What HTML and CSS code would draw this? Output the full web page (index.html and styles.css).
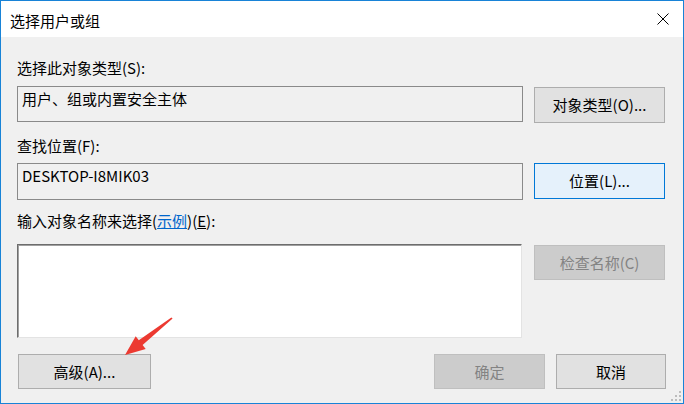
FILE: index.html
```html
<!DOCTYPE html>
<html lang="zh-CN">
<head>
    <meta charset="UTF-8">
    <title>选择用户或组</title>
    <link rel="stylesheet" href="styles.css">
</head>
<body>
    <div class="window">
        <div class="title-bar">
            <span class="title">选择用户或组</span>
            <button class="close-button" aria-label="关闭">
                <svg width="12" height="12" viewBox="0 0 12 12">
                    <path d="M0.5 0.5 L11.5 11.5 M11.5 0.5 L0.5 11.5" stroke="#000" stroke-width="1" fill="none"/>
                </svg>
            </button>
        </div>

        <div class="content">
            <div class="label">选择此对象类型(S):</div>
            <div class="row">
                <div class="field">用户、组或内置安全主体</div>
                <button class="btn btn-offset">对象类型(O)...</button>
            </div>

            <div class="label label-gap">查找位置(F):</div>
            <div class="row row-tight">
                <div class="field field-tall">DESKTOP-I8MIK03</div>
                <button class="btn btn-focus">位置(L)...</button>
            </div>

            <div class="label label-gap-small">输入对象名称来选择(<a class="link" href="#">示例</a>)(<u>E</u>):</div>
            <div class="row row-names">
                <textarea class="names"></textarea>
                <button class="btn btn-small" disabled>检查名称(C)</button>
            </div>

            <div class="footer">
                <button class="btn btn-small btn-advanced">高级(A)...</button>
                <div class="footer-right">
                    <button class="btn btn-small btn-ok" disabled>确定</button>
                    <button class="btn btn-small btn-cancel">取消</button>
                </div>
            </div>
        </div>

        <!-- 右下角的尺寸调整手柄 -->
        <svg class="grip" width="10" height="10" viewBox="0 0 10 10">
            <rect x="8" y="0" width="2" height="2" fill="#bcbcbc"/>
            <rect x="4" y="4" width="2" height="2" fill="#bcbcbc"/>
            <rect x="8" y="4" width="2" height="2" fill="#bcbcbc"/>
            <rect x="0" y="8" width="2" height="2" fill="#bcbcbc"/>
            <rect x="4" y="8" width="2" height="2" fill="#bcbcbc"/>
            <rect x="8" y="8" width="2" height="2" fill="#bcbcbc"/>
        </svg>

        <!-- 标注箭头 -->
        <svg class="arrow" width="684" height="404" viewBox="0 0 684 404">
            <polygon points="172.6,318.5 142.6,345 145.7,348.9 125,355 135.7,336.3 138.8,340.2 171.4,317.5" fill="#ec3a31"/>
        </svg>
    </div>
</body>
</html>
```

FILE: styles.css
```css
* {
    box-sizing: border-box;
}

body {
    margin: 0;
    font-family: "Noto Sans CJK SC", "Noto Sans", sans-serif;
    font-size: 15px;
    color: #000;
}

.window {
    position: relative;
    width: 684px;
    height: 404px;
    border: 1px solid #1883d7;
    background-color: #f0f0f0;
}

.title-bar {
    display: flex;
    align-items: center;
    justify-content: space-between;
    height: 36px;
    padding: 4px 10px 0 9px;
    background-color: #fff;
}

.title {
    line-height: 20px;
}

.close-button {
    display: flex;
    align-items: center;
    justify-content: center;
    width: 20px;
    height: 20px;
    padding: 0;
    margin-top: -5px;
    border: none;
    background: none;
}

.content {
    padding: 21px 17px 0 16px;
}

.label {
    height: 20px;
    line-height: 20px;
    white-space: nowrap;
}

.label-gap {
    margin-top: 13px;
}

.label-gap-small {
    margin-top: 11px;
}

.link {
    color: #0066cc;
    text-decoration: underline;
}

.row {
    display: grid;
    grid-template-columns: 506px 131px;
    column-gap: 11px;
    align-items: start;
    margin-top: 8px;
}

.row-tight {
    margin-top: 7px;
}

.row-names {
    margin-top: 13px;
}

.field {
    height: 36px;
    padding: 2px 4px 0;
    line-height: 20px;
    border: 1px solid #8a8a8a;
    white-space: nowrap;
}

.field-tall {
    height: 37px;
}

.names {
    display: block;
    width: 505px;
    height: 94px;
    margin: 0;
    resize: none;
    background-color: #fff;
    border: 1px solid;
    border-color: #6d6d6d #e3e3e3 #e3e3e3 #6d6d6d;
    box-shadow: inset 1px 1px 0 #a0a0a0;
    outline: none;
}

.btn {
    height: 36px;
    padding: 0;
    font-family: inherit;
    font-size: 15px;
    line-height: 20px;
    color: #000;
    background-color: #e1e1e1;
    border: 1px solid #adadad;
    border-radius: 0;
}

.btn-offset {
    margin-top: 1px;
}

.btn-small {
    height: 35px;
}

.btn-focus {
    background-color: #e5f1fb;
    border-color: #0078d7;
}

.btn:disabled {
    color: #838383;
    background-color: #cccccc;
    border-color: #bfbfbf;
}

.row-names .btn {
    margin-top: 1px;
}

.footer {
    display: flex;
    justify-content: space-between;
    margin-top: 16px;
}

.btn-advanced {
    width: 133px;
    margin-left: 1px;
}

.footer-right {
    display: flex;
    gap: 11px;
}

.btn-ok {
    width: 111px;
}

.btn-cancel {
    width: 110px;
}

.grip {
    position: absolute;
    right: 2px;
    bottom: 2px;
}

.arrow {
    position: absolute;
    top: -1px;
    left: -1px;
    pointer-events: none;
}
```
